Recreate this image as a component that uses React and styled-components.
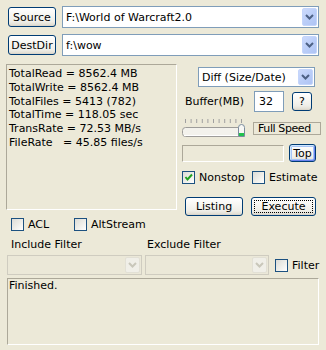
import React from 'react';
import styled, { createGlobalStyle, css } from 'styled-components';

const Global = createGlobalStyle`
  html, body { margin: 0; padding: 0; background: #ECE9D8; }
  * { box-sizing: border-box; }
`;

const Window = styled.div`
  width: 326px;
  height: 350px;
  background: #ECE9D8;
  font-family: "DejaVu Sans", Tahoma, sans-serif;
  font-size: 11px;
  color: #000;
  display: flex;
  flex-direction: column;
  padding-top: 6px;
  overflow: hidden;
`;

const PathRow = styled.div`
  display: flex;
  align-items: center;
  gap: 6px;
  height: 22px;
  padding: 0 7px 0 8px;
  & + & { margin-top: 6px; }
`;

const XPButton = styled.div`
  width: ${p => p.$w}px;
  height: ${p => p.$h}px;
  margin-left: ${p => p.$ml || 0}px;
  flex: none;
  position: relative;
  display: flex;
  align-items: center;
  justify-content: center;
  border: 1px solid #003C74;
  border-radius: 3px;
  background: linear-gradient(180deg, #FFFFFF 0%, #F7F6F2 40%, #EFEEE8 75%, #E3E0D6 92%, #D6D0C5 100%);
  white-space: nowrap;
  ${p => p.$default && css`
    box-shadow: inset 1px 1px 0 #CEE7FF, inset -1px -1px 0 #6982EE, inset 0 0 0 2px #A6C4F6;
  `}
  ${p => p.$focus && css`
    &::after {
      content: '';
      position: absolute;
      inset: 2px;
      border: 1px dotted #000;
      border-radius: 1px;
    }
  `}
`;

const ComboBox = styled.div`
  width: ${p => (p.$w ? `${p.$w}px` : 'auto')};
  flex: ${p => (p.$w ? 'none' : '1')};
  height: ${p => p.$h}px;
  margin-left: ${p => p.$ml || 0}px;
  display: flex;
  border: 1px solid ${p => (p.$disabled ? '#CFCCC0' : '#7F9DB9')};
  background: ${p => (p.$disabled ? '#EBE8D8' : '#FFFFFF')};
  padding: 1px;
`;

const ComboText = styled.div`
  flex: 1;
  display: flex;
  align-items: center;
  padding-left: 2px;
  white-space: nowrap;
  overflow: hidden;
`;

const ComboArrow = styled.div`
  width: 15px;
  flex: none;
  display: flex;
  align-items: center;
  justify-content: center;
  border-radius: 2px;
  ${p => p.$disabled ? css`
    background: #F0EFE8;
    border: 1px solid #E2E0D5;
  ` : css`
    background: linear-gradient(135deg, #CCDAFC 0%, #BBCEF8 50%, #AFC4F4 100%);
    border: 1px solid #C4D5FB;
  `}
`;

const Chevron = ({ disabled }) => (
  <svg width="9" height="6" viewBox="0 0 9 6">
    <polyline points="1,1 4.5,4.5 8,1" fill="none" stroke={disabled ? '#C9C7BA' : '#4D6185'} strokeWidth="2" />
  </svg>
);

const Combo = ({ text, w, h, ml, disabled }) => (
  <ComboBox $w={w} $h={h} $ml={ml} $disabled={disabled}>
    <ComboText>{text}</ComboText>
    <ComboArrow $disabled={disabled}><Chevron disabled={disabled} /></ComboArrow>
  </ComboBox>
);

const Main = styled.div`
  display: flex;
  margin-top: 8px;
  padding-left: 6px;
  gap: 5px;
`;

const Sunken = styled.div`
  border-top: 1px solid #ACA899;
  border-left: 1px solid #ACA899;
  border-right: 1px solid #FFFFFF;
  border-bottom: 1px solid #FFFFFF;
`;

const StatsBox = styled(Sunken)`
  width: 171px;
  height: 146px;
  flex: none;
  padding: 2px 2px;
  line-height: 13.8px;
  white-space: pre;
`;

const Side = styled.div`
  width: 138px;
  display: flex;
  flex-direction: column;
`;

const SideRow = styled.div`
  display: flex;
  align-items: ${p => p.$align || 'center'};
  height: ${p => p.$h}px;
  margin-top: ${p => p.$mt}px;
`;

const Label = styled.div`
  width: ${p => p.$w}px;
  margin-left: ${p => p.$ml || 0}px;
  flex: none;
  white-space: nowrap;
`;

const Edit = styled.div`
  width: 30px;
  height: 21px;
  flex: none;
  border: 1px solid #7F9DB9;
  background: #FFFFFF;
  display: flex;
  align-items: center;
  padding-left: 4px;
`;

const SpeedBox = styled(Sunken)`
  width: 68px;
  height: 13px;
  margin-left: 5px;
  margin-top: 3px;
  flex: none;
  display: flex;
  align-items: center;
  padding-left: 4px;
  white-space: nowrap;
  letter-spacing: -0.4px;
  border-color: #ACA899;
`;

const ProgressBox = styled(Sunken)`
  width: 102px;
  height: 17px;
  margin-top: 1px;
  flex: none;
`;

const CheckItem = styled.div`
  display: flex;
  align-items: center;
  gap: 4px;
  width: ${p => (p.$w ? `${p.$w}px` : 'auto')};
  height: 13px;
  flex: none;
  white-space: nowrap;
`;

const CheckSquare = styled.span`
  width: 13px;
  height: 13px;
  flex: none;
  border: 1px solid #1C5180;
  background: linear-gradient(135deg, #DCDCD7 0%, #EDEDE8 50%, #FFFFFF 100%);
  display: flex;
  align-items: center;
  justify-content: center;
`;

const Check = ({ label, checked, w }) => (
  <CheckItem $w={w}>
    <CheckSquare>
      {checked && (
        <svg width="9" height="9" viewBox="0 0 9 9">
          <polyline points="1.5,4 3.5,6.5 8,1.5" fill="none" stroke="#21A121" strokeWidth="2" />
        </svg>
      )}
    </CheckSquare>
    {label}
  </CheckItem>
);

const Slider = () => {
  const ticks = [];
  for (let i = 0; i < 11; i++) {
    const x = 3.5 + i * 5.6;
    ticks.push(<line key={i} x1={x} y1="0" x2={x} y2="4" stroke="#A0A0A0" strokeWidth="1" />);
  }
  return (
    <svg width="66" height="18" viewBox="0 0 66 18" style={{ flex: 'none' }}>
      {ticks}
      <rect x="0.5" y="8.5" width="62" height="9" rx="3" fill="#F3F2EC" stroke="#9D9C99" />
      <line x1="2" y1="16.5" x2="61" y2="16.5" stroke="#FFFFFF" />
      <path d="M56.5,8.5 Q56.5,5.5 59.5,5.5 Q62.5,5.5 62.5,8.5 L62.5,17.5 L56.5,17.5 Z" fill="#F7F7F4" stroke="#7A8C9E" />
      <rect x="57" y="14" width="5" height="3" fill="#21C24D" />
    </svg>
  );
};

const OptRow = styled.div`
  display: flex;
  align-items: center;
  height: 13px;
  margin-top: ${p => p.$mt}px;
  padding-left: ${p => p.$pl}px;
  gap: ${p => p.$gap || 0}px;
`;

const LogBox = styled(Sunken)`
  margin: 3px 7px 0 7px;
  height: 67px;
  padding: 0 1px;
  line-height: 14px;
`;

export default function App() {
  return (
    <>
      <Global />
      <Window>
        <PathRow>
          <XPButton $w={48} $h={20}>Source</XPButton>
          <Combo text="F:\World of Warcraft2.0" h={22} />
        </PathRow>
        <PathRow>
          <XPButton $w={48} $h={20}>DestDir</XPButton>
          <Combo text="f:\wow" h={22} />
        </PathRow>

        <Main>
          <StatsBox>
{`TotalRead = 8562.4 MB
TotalWrite = 8562.4 MB
TotalFiles = 5413 (782)
TotalTime = 118.05 sec
TransRate = 72.53 MB/s
FileRate   = 45.85 files/s`}
          </StatsBox>
          <Side>
            <SideRow $h={20} $mt={3}>
              <Combo text="Diff (Size/Date)" w={117} h={20} ml={16} />
            </SideRow>
            <SideRow $h={21} $mt={4}>
              <Label $w={69} $ml={3}>Buffer(MB)</Label>
              <Edit>32</Edit>
              <XPButton $w={20} $h={19} $ml={8}>?</XPButton>
            </SideRow>
            <SideRow $h={18} $mt={7} $align="flex-start">
              <Slider />
              <SpeedBox>Full Speed</SpeedBox>
            </SideRow>
            <SideRow $h={18} $mt={7} $align="flex-start">
              <ProgressBox />
              <XPButton $w={27} $h={18} $ml={5} $default>Top</XPButton>
            </SideRow>
            <SideRow $h={13} $mt={9}>
              <Check label="Nonstop" checked w={70} />
              <Check label="Estimate" />
            </SideRow>
            <SideRow $h={19} $mt={13}>
              <XPButton $w={58} $h={19} $ml={3}>Listing</XPButton>
              <XPButton $w={65} $h={19} $ml={8} $focus>Execute</XPButton>
            </SideRow>
          </Side>
        </Main>

        <OptRow $mt={2} $pl={11}>
          <Check label="ACL" w={63} />
          <Check label="AltStream" />
        </OptRow>
        <OptRow $mt={7} $pl={11}>
          <Label $w={136}>Include Filter</Label>
          <Label>Exclude Filter</Label>
        </OptRow>
        <SideRow $h={20} $mt={4}>
          <Combo w={135} h={20} ml={7} disabled />
          <Combo w={124} h={20} ml={3} disabled />
          <Label $ml={6}><Check label="Filter" /></Label>
        </SideRow>
        <LogBox>Finished.</LogBox>
      </Window>
    </>
  );
}
